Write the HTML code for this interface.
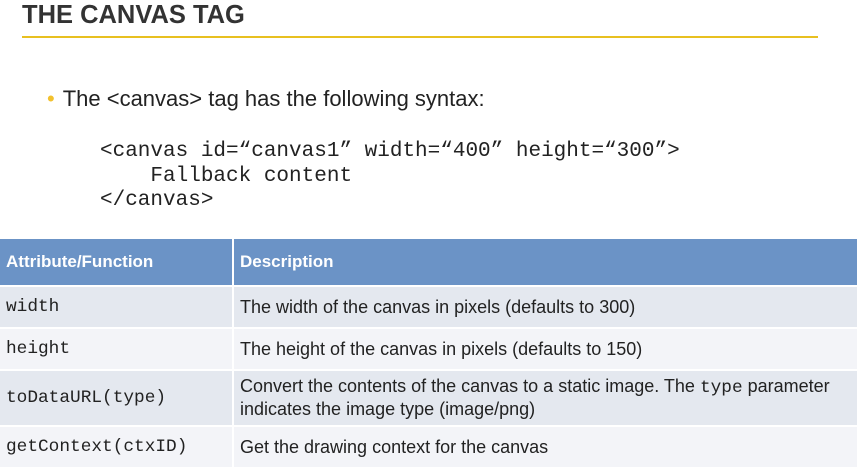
<html><head><style>
body{margin:0;width:861px;height:469px;background:#fff;position:relative;overflow:hidden;font-family:"Liberation Sans",sans-serif;color:#222}
.t{position:absolute;left:22px;top:1px;font-size:25.5px;font-weight:bold;color:#333}
.ln{position:absolute;left:22px;top:36px;width:796px;height:2px;background:#e8c020}
.b{position:absolute;left:47px;top:86px;font-size:22px}
.b span{color:#f2c12e;margin-right:8px}
pre{position:absolute;left:100px;top:140px;margin:0;font-family:"Liberation Mono",monospace;font-size:21px;line-height:24.5px;color:#222}
table{position:absolute;left:0;top:237px;border-collapse:separate;border-spacing:2px;margin-left:-2px;width:861px;font-size:18px}
td{padding:0 6px;line-height:21px}
th{background:#6b93c6;color:#fff;text-align:left;height:46px;padding:0 6px;font-weight:bold;font-size:17px}
.m{font-family:"Liberation Mono",monospace;font-size:17.8px}
tr.d td{background:#e4e8ef}tr.l td{background:#f3f4f8}
</style></head><body>
<div class="t">THE CANVAS TAG</div><div class="ln"></div>
<div class="b"><span>•</span>The &lt;canvas&gt; tag has the following syntax:</div>
<pre>&lt;canvas id=“canvas1” width=“400” height=“300”&gt;
    Fallback content
&lt;/canvas&gt;</pre>
<table>
<tr><th style="width:220px">Attribute/Function</th><th>Description</th></tr>
<tr class="d" style="height:40px"><td class="m">width</td><td>The width of the canvas in pixels (defaults to 300)</td></tr>
<tr class="l" style="height:40px"><td class="m">height</td><td>The height of the canvas in pixels (defaults to 150)</td></tr>
<tr class="d" style="height:54px"><td class="m">toDataURL(type)</td><td>Convert the contents of the canvas to a static image. The <span class="m">type</span> parameter indicates the image type (image/png)</td></tr>
<tr class="l" style="height:40px"><td class="m">getContext(ctxID)</td><td>Get the drawing context for the canvas</td></tr>
</table>
</body></html>
